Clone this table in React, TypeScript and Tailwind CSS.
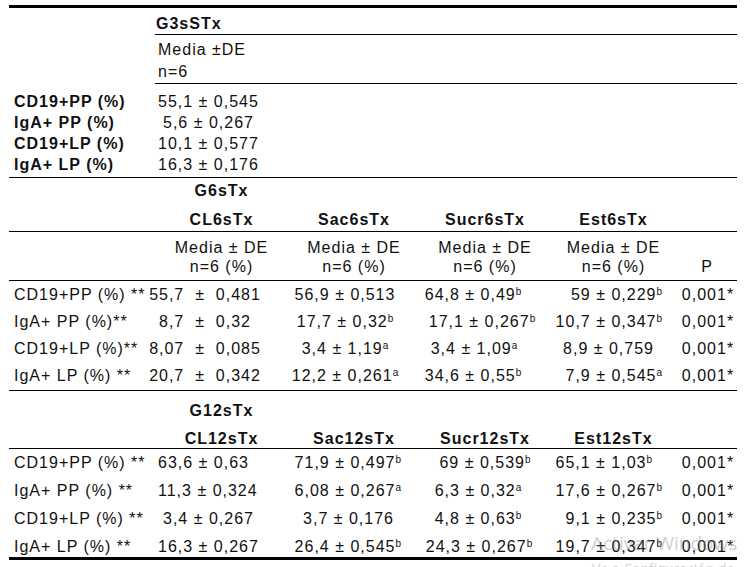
import React from "react";

type V = { t: string; s?: string; c: string };
type Row = { l: string; v: V[] };

const GRID = "grid grid-cols-[139px_135px_130px_132px_125px_67px]";

function Val({ v }: { v: V }) {
  return (
    <div className={"whitespace-pre " + v.c}>
      {v.t}
      {v.s && <sup className="text-[10px] tracking-normal">{v.s}</sup>}
    </div>
  );
}

const P = { t: "0,001*", c: "text-center pl-[9px]" };

const rows6: Row[] = [
  {
    l: "CD19+PP (%) **",
    v: [
      { t: "55,7  ±  0,481", c: "text-center pr-[21px]" },
      { t: "56,9 ± 0,513", c: "text-center pr-[6px]" },
      { t: "64,8 ± 0,49", s: "b", c: "text-center pr-[12px]" },
      { t: "59 ± 0,229", s: "b", c: "text-right pr-[8px]" },
      P,
    ],
  },
  {
    l: "IgA+ PP (%)**",
    v: [
      { t: "8,7  ±  0,32", c: "text-center pr-[21px]" },
      { t: "17,7 ± 0,32", s: "b", c: "text-center pr-[6px]" },
      { t: "17,1 ± 0,267", s: "b", c: "text-center pl-[6px]" },
      { t: "10,7 ± 0,347", s: "b", c: "text-right pr-[8px]" },
      P,
    ],
  },
  {
    l: "CD19+LP (%)**",
    v: [
      { t: "8,07  ±  0,085", c: "text-center pr-[21px]" },
      { t: "3,4 ± 1,19", s: "a", c: "text-center pr-[6px]" },
      { t: "3,4 ± 1,09", s: "a", c: "text-center pr-[10px]" },
      { t: "8,9 ± 0,759", c: "text-right pr-[16px]" },
      P,
    ],
  },
  {
    l: "IgA+ LP (%) **",
    v: [
      { t: "20,7  ±  0,342", c: "text-center pr-[21px]" },
      { t: "12,2 ± 0,261", s: "a", c: "text-center pr-[6px]" },
      { t: "34,6 ± 0,55", s: "b", c: "text-center pr-[12px]" },
      { t: "7,9 ± 0,545", s: "a", c: "text-right pr-[8px]" },
      P,
    ],
  },
];

const rows12: Row[] = [
  {
    l: "CD19+PP (%) **",
    v: [
      { t: "63,6 ± 0,63", c: "text-left pl-[10px]" },
      { t: "71,9 ± 0,497", s: "b", c: "text-right pr-[12px]" },
      { t: "69 ± 0,539", s: "b", c: "text-center pl-[12px]" },
      { t: "65,1 ± 1,03", s: "b", c: "text-right pr-[18px]" },
      P,
    ],
  },
  {
    l: "IgA+ PP (%) **",
    v: [
      { t: "11,3 ± 0,324", c: "text-left pl-[10px]" },
      { t: "6,08 ± 0,267", s: "a", c: "text-right pr-[12px]" },
      { t: "6,3 ± 0,32", s: "a", c: "text-center pr-[2px]" },
      { t: "17,6 ± 0,267", s: "b", c: "text-right pr-[8px]" },
      P,
    ],
  },
  {
    l: "CD19+LP (%) **",
    v: [
      { t: "3,4 ± 0,267", c: "text-left pl-[15px]" },
      { t: "3,7 ± 0,176", c: "text-right pr-[19px]" },
      { t: "4,8 ± 0,63", s: "b", c: "text-center pr-[2px]" },
      { t: "9,1 ± 0,235", s: "b", c: "text-right pr-[8px]" },
      P,
    ],
  },
  {
    l: "IgA+ LP (%) **",
    v: [
      { t: "16,3 ± 0,267", c: "text-left pl-[10px]" },
      { t: "26,4 ± 0,545", s: "b", c: "text-right pr-[12px]" },
      { t: "24,3 ± 0,267", s: "b", c: "text-center" },
      { t: "19,7 ± 0,347", s: "b", c: "text-right pr-[8px]" },
      P,
    ],
  },
];

function DataRows({ rows }: { rows: Row[] }) {
  return (
    <>
      {rows.map((r) => (
        <div key={r.l} className={GRID}>
          <div className="pl-[5px] whitespace-pre">{r.l}</div>
          {r.v.map((v, i) => (
            <Val key={i} v={v} />
          ))}
        </div>
      ))}
    </>
  );
}

export default function App() {
  return (
    <div className="relative w-[749px] h-[567px] overflow-hidden bg-white text-[#111] font-['Liberation_Sans',Arial,sans-serif] text-[16px] tracking-[1px]">
      <div className="ml-[9px] mt-[5px] w-[728px] border-t-[3px] border-black">
        {/* G3sSTx section */}
        <div className="grid grid-cols-[146px_582px]">
          <div />
          <div className="h-[27px] border-b border-black pt-[6px] pl-[1px] font-bold leading-[20px]">G3sSTx</div>
          <div />
          <div className="h-[49px] border-b border-black pt-[4px] pl-[3px] leading-[22px]">
            <div>Media ±DE</div>
            <div>n=6</div>
          </div>
        </div>
        <div className="grid grid-cols-[146px_582px] border-b border-black pt-[7px] pb-[2px] leading-[21px]">
          <div className="pl-[5px] font-bold">
            <div>CD19+PP (%)</div>
            <div>IgA+ PP (%)</div>
            <div>CD19+LP (%)</div>
            <div>IgA+ LP (%)</div>
          </div>
          <div>
            <div className="pl-[3px]">55,1 ± 0,545</div>
            <div className="pl-[8px]">5,6 ± 0,267</div>
            <div className="pl-[3px]">10,1 ± 0,577</div>
            <div className="pl-[3px]">16,3 ± 0,176</div>
          </div>
        </div>

        {/* G6sTx section */}
        <div className={GRID + " h-[28px] pt-[3px] leading-[20px] font-bold"}>
          <div />
          <div className="text-center pl-[12px]">G6sTx</div>
        </div>
        <div className={GRID + " h-[26px] pt-[4px] leading-[20px] font-bold border-b border-black"}>
          <div />
          <div className="text-center pl-[12px]">CL6sTx</div>
          <div className="text-center pl-[12px]">Sac6sTx</div>
          <div className="text-center pl-[12px]">Sucr6sTx</div>
          <div className="text-center pl-[12px]">Est6sTx</div>
          <div />
        </div>
        <div className={GRID + " h-[49px] pt-[6px] leading-[19px] border-b border-black"}>
          <div />
          {[0, 1, 2, 3].map((i) => (
            <div key={i} className="text-center pl-[12px] whitespace-pre">
              <div>Media ± DE</div>
              <div>n=6 (%)</div>
            </div>
          ))}
          <div className="text-center pl-[7px]">
            <div>&nbsp;</div>
            <div>P</div>
          </div>
        </div>
        <div className="grid grid-rows-[27px_27px_27px_27px] h-[110px] pb-[1px] leading-[27px] border-b border-black">
          <DataRows rows={rows6} />
        </div>

        {/* G12sTx section */}
        <div className={GRID + " h-[29px] pt-[11px] leading-[18px] font-bold"}>
          <div />
          <div className="text-center pl-[12px]">G12sTx</div>
        </div>
        <div className={GRID + " h-[29px] pt-[10px] leading-[18px] font-bold border-b border-black"}>
          <div />
          <div className="text-center pl-[12px]">CL12sTx</div>
          <div className="text-center pl-[12px]">Sac12sTx</div>
          <div className="text-center pl-[12px]">Sucr12sTx</div>
          <div className="text-center pl-[12px]">Est12sTx</div>
          <div />
        </div>
        <div className="grid grid-rows-[28px_28px_28px_24px] h-[111px] leading-[28px] border-b-[3px] border-black">
          <DataRows rows={rows12} />
        </div>
      </div>

      {/* Windows activation watermark overlay */}
      <div className="absolute left-[591px] top-[530px] font-['Open_Sans',sans-serif] tracking-normal text-[rgba(130,130,130,0.4)]">
        <div className="text-[19px] leading-[26px]">Activar Windows</div>
        <div className="mt-[4px] text-[14px] leading-[18px] pl-[1px]">Ve a Configuración de PC</div>
      </div>
    </div>
  );
}
